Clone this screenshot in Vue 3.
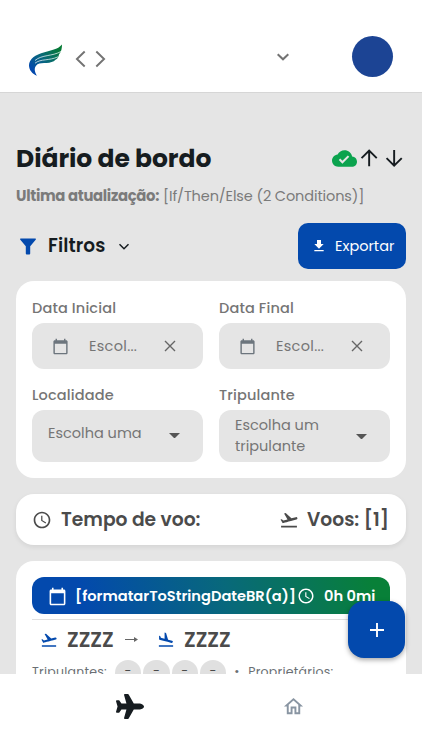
<script setup>
import {ref} from 'vue'

const icons = {
  takeoff: 'M2.5 19h19v2h-19v-2zm19.57-9.36c-.21-.8-1.04-1.28-1.84-1.06L14.92 10l-6.9-6.43-1.93.51 4.14 7.17-4.97 1.33-1.97-1.54-1.45.39 2.59 4.49s7.12-1.9 16.57-4.43c.81-.23 1.28-1.05 1.07-1.85z',
  landing: 'M2.5 19h19v2h-19v-2zm7.18-5.73l4.35 1.16 5.31 1.42c.8.21 1.62-.26 1.84-1.06.21-.8-.26-1.62-1.06-1.84l-5.31-1.42-2.76-9.02L10.12 2v8.28L5.15 8.95l-.93-2.32-1.45-.39v5.17l1.6.43 5.31 1.43z',
  calendar: 'M20 3h-1V1h-2v2H7V1H5v2H4c-1.1 0-2 .9-2 2v16c0 1.1.9 2 2 2h16c1.1 0 2-.9 2-2V5c0-1.1-.9-2-2-2zm0 18H4V8h16v13z',
  clock: 'M11.99 2C6.47 2 2 6.48 2 12s4.47 10 9.99 10C17.52 22 22 17.52 22 12S17.52 2 11.99 2zM12 20c-4.42 0-8-3.58-8-8s3.58-8 8-8 8 3.58 8 8-3.58 8-8 8zm.5-13H11v6l5.25 3.15.75-1.23-4.5-2.67z',
  cloud: 'M19.35 10.04C18.67 6.59 15.64 4 12 4 9.11 4 6.6 5.64 5.35 8.04 2.34 8.36 0 10.91 0 14c0 3.31 2.69 6 6 6h13c2.76 0 5-2.24 5-5 0-2.64-2.05-4.78-4.65-4.96zM10 17l-3.5-3.5 1.41-1.41L10 14.17 15.18 9l1.41 1.41L10 17z',
  download: 'M19 9h-4V3H9v6H5l7 7 7-7zM5 18v2h14v-2H5z',
  home: 'M12 5.69l5 4.5V18h-2v-6H9v6H7v-7.81l5-4.5M12 3L2 12h3v8h6v-6h2v6h6v-8h3L12 3z',
  plane: 'M480 192H365.71L260.61 8.06A16.014 16.014 0 0 0 246.71 0h-65.5c-10.63 0-18.3 10.17-15.38 20.39L214.86 192H112l-43.2-57.6c-3.02-4.03-7.77-6.4-12.8-6.4H16.01C5.6 128-2.04 137.78.49 147.88L32 256 .49 364.12C-2.04 374.22 5.6 384 16.01 384H56c5.04 0 9.78-2.37 12.8-6.4L112 320h102.86l-49.03 171.6c-2.92 10.22 4.75 20.4 15.38 20.4h65.5c5.74 0 11.04-3.08 13.89-8.06L365.71 320H480c35.35 0 96-28.65 96-64s-60.65-64-96-64z',
}

const dates = ref([
  {label: 'Data Inicial'},
  {label: 'Data Final'},
])

const selects = ref([
  {label: 'Localidade', text: 'Escolha uma', cls: 'localidade'},
  {label: 'Tripulante', text: 'Escolha um tripulante', cls: 'tripulante'},
])

const crew = ref(['-', '-', '-', '-'])
</script>

<template>
  <div class="app">
    <header>
      <svg class="logo" viewBox="0 0 36 34">
        <defs>
          <linearGradient id="wing" x1="0" y1="1" x2="1" y2="0">
            <stop offset="0.15" stop-color="#0349ad" />
            <stop offset="0.5" stop-color="#08697a" />
            <stop offset="0.9" stop-color="#067a35" />
          </linearGradient>
        </defs>
        <path fill="url(#wing)" d="M34 1.500C30 6.300 24 7 16.500 9.200C7 11.800 1.300 16 1 22C.8 27 4.500 31 9 32.800C6.300 28.500 5.600 24 9.500 21.200C14 19 23.500 21.500 27.500 16.800C30 15.500 30.500 13.500 31 11.500C33.500 8.500 34 5 34 1.500Z" />
        <path fill="none" stroke="#fff" stroke-width=".7" d="M7 17.500C14 11.500 24 13.500 33 8.500M7 20.200C13 15.500 21 18 30 13.800" />
      </svg>
      <svg class="angles" viewBox="0 0 32 18">
        <path d="M10 1.300L2 9l8 7.700M22 1.300L30 9l-8 7.700" />
      </svg>
      <svg class="header-chevron" viewBox="0 0 14 8"><path d="M1.700 1.200L7 6.300l5.300-5.100" /></svg>
      <div class="avatar"></div>
    </header>

    <main>
      <div class="title-row">
        <h1>Diário de bordo</h1>
        <div class="title-icons">
          <svg class="cloud" viewBox="0 0 24 24"><path :d="icons.cloud" /></svg>
          <svg class="arrow" viewBox="0 0 24 24"><path d="M12 20V4.500M4.500 12L12 4.500l7.500 7.500" /></svg>
          <svg class="arrow" viewBox="0 0 24 24"><path d="M12 4v15.500M4.500 12l7.500 7.500 7.500-7.500" /></svg>
        </div>
      </div>
      <p class="updated"><b>Ultima atualização:</b><span>[If/Then/Else (2 Conditions)]</span></p>

      <div class="filter-row">
        <svg class="funnel" viewBox="0 0 16 17"><path d="M.6.500h14.800q.9.300.3 1.200L10.200 8.300v7.200q0 .9-.9.900H6.700q-.9 0-.9-.9V8.300L.3 1.700Q-.3.800.6.500z" /></svg>
        <h2>Filtros</h2>
        <svg class="filter-chevron" viewBox="0 0 12 8"><path d="M1.500 1.300L6 5.800l4.500-4.500" /></svg>
        <button class="export">
          <svg viewBox="0 0 24 24"><path :d="icons.download" /></svg>
          <span>Exportar</span>
        </button>
      </div>

      <section class="filters">
        <div v-for="date in dates" :key="date.label" class="field">
          <label>{{ date.label }}</label>
          <div class="date-input">
            <svg class="calendar" viewBox="0 0 24 24"><path :d="icons.calendar" /></svg>
            <span>Escol...</span>
            <svg class="clear" viewBox="0 0 12 12"><path d="M1 1l10 10M11 1L1 11" /></svg>
          </div>
        </div>
        <div v-for="select in selects" :key="select.label" class="field">
          <label>{{ select.label }}</label>
          <div class="select-input" :class="select.cls">
            <span>{{ select.text }}</span>
            <svg viewBox="0 0 10 5"><path d="M0 0h10L5 5z" /></svg>
          </div>
        </div>
      </section>

      <section class="totals">
        <svg class="total-clock" viewBox="0 0 24 24"><path :d="icons.clock" /></svg>
        <span class="time">Tempo de voo:</span>
        <svg class="total-plane" viewBox="0 0 24 24"><path :d="icons.takeoff" /></svg>
        <span class="flights">Voos: [1]</span>
      </section>

      <section class="flight">
        <div class="flight-head">
          <svg class="head-calendar" viewBox="0 0 24 24"><path :d="icons.calendar" /></svg>
          <span class="head-date">[formatarToStringDateBR(a)]</span>
          <svg class="head-clock" viewBox="0 0 24 24"><path :d="icons.clock" /></svg>
          <span class="head-time">0h 0mi</span>
        </div>
        <hr>
        <div class="route">
          <svg class="route-icon" viewBox="0 0 24 24"><path :d="icons.takeoff" /></svg>
          <span>ZZZZ</span>
          <svg class="route-arrow" viewBox="0 0 13 7"><path d="M0 3.500h11" /><path class="tip" d="M9 1l4 2.500L9 6z" /></svg>
          <svg class="route-icon" viewBox="0 0 24 24"><path :d="icons.landing" /></svg>
          <span>ZZZZ</span>
        </div>
        <div class="crew">
          <span class="crew-label">Tripulantes:</span>
          <i v-for="(member, i) in crew" :key="i">{{ member }}</i>
          <span class="dot">•</span>
          <span class="owners">Proprietários:</span>
        </div>
      </section>
    </main>

    <button class="add">
      <svg viewBox="0 0 16 16"><path d="M8 1v14M1 8h14" /></svg>
    </button>

    <nav>
      <svg class="nav-plane" viewBox="0 0 576 512"><path :d="icons.plane" /></svg>
      <svg class="nav-home" viewBox="0 0 24 24"><path :d="icons.home" /></svg>
    </nav>
  </div>
</template>

<style>
body {
  margin: 0;
  overflow: hidden;
}
</style>

<style scoped>
* {
  box-sizing: border-box;
}

.app {
  position: relative;
  display: flex;
  flex-direction: column;
  width: 422px;
  height: 750px;
  overflow: hidden;
  background: #e5e5e5;
  color: #161c20;
  font-family: Poppins, Inter, sans-serif;
  font-size: 14.500px;
}

svg {
  flex: none;
  display: block;
  fill: currentColor;
}

span, h1, h2, label {
  white-space: nowrap;
}

button {
  border: none;
  padding: 0;
  font-family: inherit;
}

header {
  flex: none;
  display: flex;
  align-items: center;
  height: 93px;
  padding: 20px 29px 0 28px;
  background: #fff;
  border-bottom: 1px solid #d6d6d6;
}

.logo {
  width: 36px;
  height: 34px;
  margin-top: 8px;
}

.angles {
  width: 31px;
  height: 18px;
  margin: 6px 0 0 11px;
}

.angles path, .header-chevron path {
  fill: none;
  stroke: #737373;
  stroke-width: 2;
}

.header-chevron {
  width: 14px;
  height: 8px;
  margin: 1px 0 0 170px;
}

.avatar {
  width: 41px;
  height: 41px;
  margin-left: auto;
  border-radius: 50%;
  background: #1c4494;
}

main {
  flex: 1;
  min-height: 0;
  overflow: hidden;
  padding: 47px 16px 0;
}

.title-row {
  display: flex;
  align-items: center;
  justify-content: space-between;
  height: 37px;
}

h1 {
  margin: 0;
  font-size: 25px;
  font-weight: 700;
  letter-spacing: -.05px;
}

.title-icons {
  display: flex;
  margin-top: -1px;
}

.cloud {
  width: 25px;
  height: 25px;
  color: #0ba34e;
}

.arrow {
  width: 24.300px;
  height: 24.300px;
}

.arrow path {
  fill: none;
  stroke: #161c20;
  stroke-width: 1.900;
}

.updated {
  display: flex;
  height: 24px;
  margin: 7px 0 0;
  color: #7b7b7b;
  line-height: 24px;
}

.updated b {
  width: 147px;
  font-size: 14.800px;
  font-weight: 700;
  letter-spacing: -.3px;
  white-space: nowrap;
}

.updated span {
  font-size: 14.500px;
  letter-spacing: -.12px;
}

.filter-row {
  display: flex;
  align-items: center;
  height: 46px;
  margin-top: 15px;
}

.funnel {
  width: 16px;
  height: 17px;
  margin-left: 4px;
  color: #0349ad;
}

h2 {
  width: 58px;
  margin: -1px 0 0 12px;
  font-size: 18.500px;
  font-weight: 600;
  letter-spacing: .1px;
}

.filter-chevron {
  width: 12px;
  height: 8px;
  margin-left: 12px;
  margin-top: 1px;
}

.filter-chevron path {
  fill: none;
  stroke: #161c20;
  stroke-width: 1.500;
}

.export {
  display: flex;
  align-items: center;
  width: 108px;
  height: 46px;
  margin-left: auto;
  padding-left: 13px;
  border-radius: 10px;
  background: #0349ad;
  color: #fff;
  font-size: 14.500px;
}

.export svg {
  width: 16px;
  height: 16px;
  margin-right: 8px;
}

.filters {
  display: grid;
  grid-template-columns: 171px 171px;
  grid-template-rows: 87px auto;
  column-gap: 16px;
  height: 197px;
  margin-top: 12px;
  padding: 16px;
  border-radius: 18px;
  background: #fff;
  color: #757575;
}

label {
  display: block;
  height: 22px;
  margin-bottom: 4px;
  line-height: 22px;
  font-weight: 500;
  letter-spacing: .15px;
}

.date-input, .select-input {
  display: flex;
  align-items: center;
  border-radius: 12px;
  background: #e5e5e5;
}

.date-input {
  height: 46px;
  padding: 0 0 0 20px;
}

.calendar {
  width: 17px;
  height: 17px;
  color: #6c757d;
}

.date-input span {
  width: 48px;
  margin-left: 20px;
  letter-spacing: .3px;
}

.clear {
  width: 12px;
  height: 12px;
  margin-left: 27px;
}

.clear path {
  fill: none;
  stroke: #666;
  stroke-width: 1.400;
}

.select-input {
  height: 52px;
  padding: 0 23px 0 16px;
  justify-content: space-between;
  line-height: 21px;
}

.select-input span {
  width: 97px;
  white-space: normal;
}

.select-input.localidade span {
  margin-top: -5px;
  white-space: nowrap;
}

.select-input svg {
  width: 11px;
  height: 5.500px;
  margin-top: -1px;
  color: #555;
}

.select-input.tripulante svg {
  margin-top: 1px;
}

.totals {
  display: flex;
  align-items: center;
  height: 51px;
  margin-top: 16px;
  padding: 0 16px;
  border-radius: 18px;
  background: #fff;
  box-shadow: 0 2px 5px rgba(0, 0, 0, .08);
  color: #4b4b4b;
  font-size: 18.700px;
  font-weight: 600;
}

.total-clock {
  width: 20px;
  height: 20px;
}

.time {
  margin-left: 9px;
}

.total-plane {
  width: 20px;
  height: 20px;
  margin-left: auto;
}

.flights {
  width: 83px;
  margin-left: 8px;
}

.flight {
  height: 180px;
  margin-top: 16px;
  padding: 16px;
  border-radius: 18px 18px 0 0;
  background: #fff;
}

.flight-head {
  display: flex;
  align-items: center;
  height: 37px;
  padding: 1px 0 0 16px;
  border-radius: 12px;
  background: linear-gradient(75deg, #0349ad 15%, #08697a 55%, #088038 95%);
  color: #fff;
  font-size: 14.600px;
  font-weight: 600;
}

.head-calendar {
  width: 19px;
  height: 19px;
}

.head-date {
  width: 222px;
  margin-left: 8px;
}

.head-clock {
  width: 18px;
  height: 18px;
}

.head-time {
  margin-left: 9px;
}

hr {
  height: 1px;
  margin: 5px 0 0;
  border: none;
  background: #e0e0e0;
}

.route {
  display: flex;
  align-items: center;
  height: 39px;
  padding-left: 8px;
  color: #4b4b4b;
  font-size: 20.300px;
  font-weight: 600;
}

.route span {
  width: 48px;
}

.route-icon {
  width: 18px;
  height: 18px;
  margin-right: 9px;
  color: #0349ad;
}

.route-arrow {
  width: 13px;
  height: 7px;
  margin: 0 19px 0 10px;
  color: #666;
}

.route-arrow path {
  stroke: #666;
}

.route-arrow .tip {
  stroke: none;
}

.crew {
  display: flex;
  height: 26px;
  color: #6a6f74;
  font-size: 12.500px;
  line-height: 25px;
  letter-spacing: .25px;
}

.crew-label {
  width: 83px;
}

i {
  width: 26.300px;
  height: 26px;
  margin: 1px 2px 0 0;
  border-radius: 13px;
  background: #e0e0e0;
  color: #4b4b4b;
  font-style: normal;
  line-height: 21px;
  text-align: center;
}

.dot {
  width: 14px;
  margin-left: 6px;
}

.add {
  position: absolute;
  left: 348px;
  top: 601px;
  display: flex;
  align-items: center;
  justify-content: center;
  width: 57px;
  height: 57px;
  border-radius: 16px;
  background: #0349ad;
  box-shadow: 0 2px 5px rgba(0, 0, 0, .35);
}

.add svg {
  width: 16px;
  height: 16px;
}

.add path {
  stroke: #fff;
  stroke-width: 1.900;
}

nav {
  position: relative;
  flex: none;
  display: flex;
  height: 76px;
  padding: 20px 0 0 116px;
  background: #fff;
}

.nav-plane {
  width: 28px;
  height: 25px;
}

.nav-home {
  width: 23px;
  height: 23px;
  margin: 1px 0 0 137.500px;
  color: #8995a2;
}
</style>
